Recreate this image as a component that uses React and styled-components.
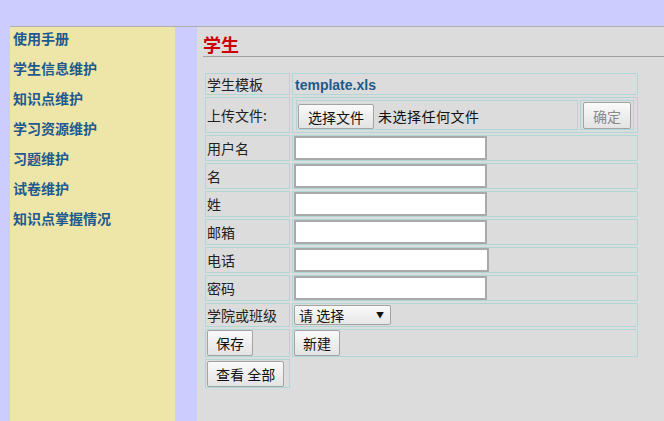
import React from "react";
import styled, { createGlobalStyle } from "styled-components";

const Global = createGlobalStyle`
  html, body { margin: 0; padding: 0; background: #ccccff; }
  body { font-family: "Liberation Sans", "Noto Sans CJK SC", sans-serif; font-size: 14px; color: #222; }
  * { box-sizing: border-box; }
`;

const Page = styled.div`
  padding: 26px 0 0 10px;
  min-height: 100vh;
`;

const Layout = styled.div`
  display: flex;
  gap: 22px;
  border-top: 1px solid #adadad;
  min-height: calc(100vh - 26px);
`;

const Sidebar = styled.nav`
  width: 165px;
  flex: none;
  background: #eee6a8;
  padding: 1px 0 0 3px;
  display: flex;
  flex-direction: column;
  gap: 10px;
`;

const NavLink = styled.a`
  display: block;
  font-family: "Noto Sans CJK SC", sans-serif;
  font-weight: bold;
  font-size: 14px;
  line-height: 20px;
  color: #1d5a8e;
  text-decoration: none;
`;

const Main = styled.main`
  flex: 1;
  background: #dcdcdc;
  padding: 5px 0 0 6px;
`;

const Title = styled.h2`
  margin: 0 0 14px;
  font-family: "Noto Sans CJK SC", sans-serif;
  font-size: 18px;
  line-height: 24px;
  font-weight: bold;
  color: #cc0000;
  border-bottom: 1px solid #a0a0a0;
`;

const Table = styled.table`
  border-spacing: 2px;
  width: 437px;
`;

const Cell = styled.td`
  border: 1px solid #afd6d8;
  padding: ${(p) => p.$pad || "0 1px"};
  height: ${(p) => p.$h}px;
  vertical-align: middle;
  font-family: "Noto Sans CJK SC", sans-serif;
  font-size: 14px;
  line-height: 18px;
  color: #222;
  white-space: nowrap;
`;

const LabelCell = styled(Cell)`
  width: 85px;
`;

const FileLink = styled.a`
  font-family: "Liberation Sans", sans-serif;
  font-weight: bold;
  font-size: 14px;
  color: #1d5a8e;
  text-decoration: none;
  margin-left: 1px;
`;

const UploadRow = styled.div`
  display: flex;
  gap: 2px;
`;

const InnerBox = styled.div`
  flex: ${(p) => (p.$grow ? 1 : "none")};
  height: 30px;
  border: 1px solid #afd6d8;
  display: flex;
  align-items: flex-end;
  gap: 4px;
  padding: 0 ${(p) => (p.$grow ? 1 : 2)}px;
`;

const Button = styled.button`
  height: ${(p) => p.$h || 26}px;
  padding: 0 ${(p) => p.$px || 8}px;
  border: 1px solid #a3a3a3;
  border-radius: 2px;
  background: linear-gradient(#fafafa, #e3e3e3);
  font-family: "Noto Sans CJK SC", sans-serif;
  font-size: 14px;
  line-height: 18px;
  color: ${(p) => (p.disabled ? "#8a8a8a" : "#111")};
  display: inline-flex;
  align-items: center;
  cursor: default;
`;

const NoFile = styled.span`
  line-height: 25px;
  color: #111;
  letter-spacing: 0.5px;
`;

const TextInput = styled.input`
  display: block;
  width: ${(p) => p.$w || 193}px;
  height: 24px;
  border: 2px solid #a9a9a9;
  border-radius: 1px;
  background: #fff;
  padding: 0 3px;
  font-size: 14px;
  outline: none;
`;

const Select = styled.div`
  width: 97px;
  height: 20px;
  border: 1px solid #a3a3a3;
  border-radius: 2px;
  background: linear-gradient(#fafafa, #e6e6e6);
  display: flex;
  align-items: center;
  justify-content: space-between;
  padding: 0 6px 0 4px;
  font-family: "Noto Sans CJK SC", sans-serif;
  font-size: 14px;
  color: #111;
`;

const Caret = styled.span`
  font-size: 8px;
  color: #111;
`;

const navItems = ["使用手册", "学生信息维护", "知识点维护", "学习资源维护", "习题维护", "试卷维护", "知识点掌握情况"];

const fields = [
  { label: "用户名", w: 193 },
  { label: "名", w: 193 },
  { label: "姓", w: 193 },
  { label: "邮箱", w: 193 },
  { label: "电话", w: 195 },
  { label: "密码", w: 193, type: "password" },
];

export default function App() {
  return (
    <>
      <Global />
      <Page>
        <Layout>
          <Sidebar>
            {navItems.map((t) => (
              <NavLink key={t} href="#">{t}</NavLink>
            ))}
          </Sidebar>
          <Main>
            <Title>学生</Title>
            <Table>
              <tbody>
                <tr>
                  <LabelCell $h={22}>学生模板</LabelCell>
                  <Cell $h={22}><FileLink href="#">template.xls</FileLink></Cell>
                </tr>
                <tr>
                  <LabelCell $h={36}>上传文件:</LabelCell>
                  <Cell $h={36} $pad="1px 3px 1px 3px">
                    <UploadRow>
                      <InnerBox $grow>
                        <Button $h={25} $px={9}>选择文件</Button>
                        <NoFile>未选择任何文件</NoFile>
                      </InnerBox>
                      <InnerBox>
                        <Button $h={27} $px={9} disabled>确定</Button>
                      </InnerBox>
                    </UploadRow>
                  </Cell>
                </tr>
                {fields.map((f) => (
                  <tr key={f.label}>
                    <LabelCell $h={26}>{f.label}</LabelCell>
                    <Cell $h={26}>
                      <TextInput type={f.type || "text"} $w={f.w} />
                    </Cell>
                  </tr>
                ))}
                <tr>
                  <LabelCell $h={24}>学院或班级</LabelCell>
                  <Cell $h={24}>
                    <Select>
                      <span>请 选择</span>
                      <Caret>▼</Caret>
                    </Select>
                  </Cell>
                </tr>
                <tr>
                  <LabelCell $h={28}><Button>保存</Button></LabelCell>
                  <Cell $h={28}><Button>新建</Button></Cell>
                </tr>
                <tr>
                  <LabelCell $h={29}><Button>查看 全部</Button></LabelCell>
                </tr>
              </tbody>
            </Table>
          </Main>
        </Layout>
      </Page>
    </>
  );
}
